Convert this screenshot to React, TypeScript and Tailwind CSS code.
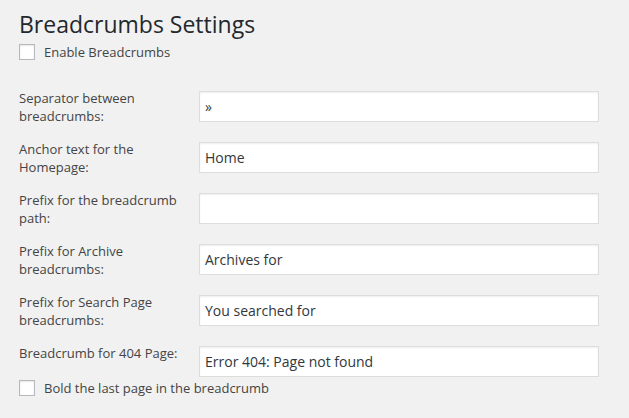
import React from "react";

const rows: { label: string; value: string }[] = [
  { label: "Separator between breadcrumbs:", value: "»" },
  { label: "Anchor text for the Homepage:", value: "Home" },
  { label: "Prefix for the breadcrumb path:", value: "" },
  { label: "Prefix for Archive breadcrumbs:", value: "Archives for" },
  { label: "Prefix for Search Page breadcrumbs:", value: "You searched for" },
  { label: "Breadcrumb for 404 Page:", value: "Error 404: Page not found" },
];

function Check({ label }: { label: string }) {
  return (
    <label className="flex items-center gap-[9px]">
      <span className="w-[16px] h-[16px] border border-[#b4b9be] bg-white shadow-[inset_0_1px_2px_rgba(0,0,0,0.1)]" />
      <span className="text-[13px] leading-[18px] text-[#444]">{label}</span>
    </label>
  );
}

export default function App() {
  return (
    <div
      className="w-full min-h-screen bg-[#f1f1f1] pl-[19px] pt-[9px]"
      style={{ fontFamily: '"Open Sans", "Liberation Sans", sans-serif' }}
    >
      <h1 className="text-[23px] leading-[30px] text-[#23282d] font-normal">Breadcrumbs Settings</h1>
      <div className="mt-[4px]">
        <Check label="Enable Breadcrumbs" />
      </div>
      <div className="mt-[30px] flex flex-col gap-[20px]">
        {rows.map((r) => (
          <div key={r.label} className="flex h-[31px]">
            <div className="w-[180px] pr-[10px] -mt-[2px] text-[13px] leading-[18px] text-[#444]">{r.label}</div>
            <div className="w-[400px] h-[31px] border border-[#ddd] bg-white shadow-[inset_0_1px_2px_rgba(0,0,0,0.07)] px-[5px] flex items-center text-[14px] text-[#32373c]">
              {r.value}
            </div>
          </div>
        ))}
      </div>
      <div className="mt-[2px]">
        <Check label="Bold the last page in the breadcrumb" />
      </div>
    </div>
  );
}
